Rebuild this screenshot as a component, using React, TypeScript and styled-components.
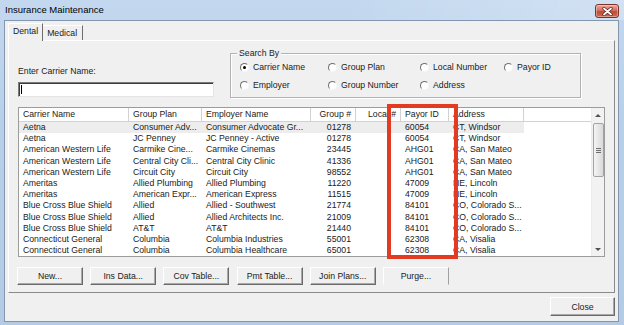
import { FC } from "react";
import styled, { createGlobalStyle } from "styled-components";

type Align = "left" | "right";

interface Column {
    title: string;
    width: number;
    align: Align;
}

const columns: Column[] = [
    { title: "Carrier Name", width: 110, align: "left" },
    { title: "Group Plan", width: 73, align: "left" },
    { title: "Employer Name", width: 109, align: "left" },
    { title: "Group #", width: 45, align: "right" },
    { title: "Local #", width: 45, align: "right" },
    { title: "Payor ID", width: 48, align: "left" },
    { title: "Address", width: 75, align: "left" },
];

const rows: string[][] = [
    ["Aetna", "Consumer Adv...", "Consumer Advocate Gr...", "01278", "", "60054", "CT, Windsor"],
    ["Aetna", "JC Penney", "JC Penney - Active", "01278", "", "60054", "CT, Windsor"],
    ["American Western Life", "Carmike Cine...", "Carmike Cinemas", "23445", "", "AHG01", "CA, San Mateo"],
    ["American Western Life", "Central City Cli...", "Central City Clinic", "41336", "", "AHG01", "CA, San Mateo"],
    ["American Western Life", "Circuit City", "Circuit City", "98552", "", "AHG01", "CA, San Mateo"],
    ["Ameritas", "Allied Plumbing", "Allied Plumbing", "11220", "", "47009", "NE, Lincoln"],
    ["Ameritas", "American Expr...", "American Express", "11515", "", "47009", "NE, Lincoln"],
    ["Blue Cross Blue Shield", "Allied", "Allied - Southwest", "21774", "", "84101", "CO, Colorado S..."],
    ["Blue Cross Blue Shield", "Allied", "Allied Architects Inc.", "21009", "", "84101", "CO, Colorado S..."],
    ["Blue Cross Blue Shield", "AT&T", "AT&T", "21440", "", "84101", "CO, Colorado S..."],
    ["Connecticut General", "Columbia", "Columbia Industries", "55001", "", "62308", "CA, Visalia"],
    ["Connecticut General", "Columbia", "Columbia Healthcare", "65001", "", "62308", "CA, Visalia"],
];

const searchOptions = [
    { label: "Carrier Name", checked: true },
    { label: "Group Plan" },
    { label: "Local Number" },
    { label: "Payor ID" },
    { label: "Employer" },
    { label: "Group Number" },
    { label: "Address" },
];

const actions = ["New...", "Ins Data...", "Cov Table...", "Pmt Table...", "Join Plans...", "Purge..."];

const GlobalStyle = createGlobalStyle`
    html, body {
        margin: 0;
        padding: 0;
        background: #fff;
    }

    body {
        font-family: "Liberation Sans", Arial, sans-serif;
        font-size: 8.7px;
        color: #1a1a1a;
    }

    * {
        box-sizing: border-box;
    }
`;

const Window = styled.div`
    width: 624px;
    height: 325px;
    display: flex;
    flex-direction: column;
    background: linear-gradient(180deg, #c3d8ef 0%, #b9cfe9 40%, #b4cbe6 100%);
    overflow: hidden;
`;

const TitleBar = styled.div`
    height: 20px;
    flex: none;
    display: flex;
    align-items: flex-start;
    padding: 0 5px 0 5px;
    background: linear-gradient(90deg, rgba(255,255,255,0) 0%, rgba(255,255,255,0) 55%, rgba(255,255,255,0.25) 100%);
`;

const Title = styled.span`
    font-size: 9.5px;
    line-height: 20px;
    color: #000;
`;

const CaptionClose = styled.div`
    margin-left: auto;
    margin-top: 4px;
    width: 24px;
    height: 14px;
    border: 1px solid #7b3329;
    border-radius: 3px;
    background: linear-gradient(180deg, #e9a699 0%, #d5715f 45%, #c24a36 55%, #cf6a52 100%);
    display: flex;
    align-items: center;
    justify-content: center;
    box-shadow: inset 0 0 0 1px rgba(255,255,255,0.35);
`;

const Client = styled.div`
    flex: 1;
    margin: 0 5px 3px 4px;
    border: 1px solid #8296ad;
    background: #f0f0f0;
    display: flex;
    flex-direction: column;
    padding: 2px 2px 5px 3px;
`;

const TabStrip = styled.div`
    height: 17px;
    flex: none;
    display: flex;
    align-items: flex-end;
`;

const Tab = styled.div<{ $active?: boolean }>`
    position: relative;
    z-index: 1;
    height: ${(p) => (p.$active ? 18 : 15)}px;
    margin-bottom: ${(p) => (p.$active ? -1 : 0)}px;
    padding: ${(p) => (p.$active ? "0 4px" : "0 5px 0 4px")};
    background: #f0f0f0;
    border-top: 1px solid #fff;
    border-left: ${(p) => (p.$active ? "1px solid #fff" : "none")};
    border-right: 1px solid #6d6d6d;
    line-height: ${(p) => (p.$active ? 15 : 14)}px;
    text-align: center;
    white-space: nowrap;
`;

const Panel = styled.div`
    height: 253px;
    flex: none;
    display: flex;
    flex-direction: column;
    border: 1px solid;
    border-color: #fff #8a8a8a #8a8a8a #fff;
    margin-right: 1px;
`;

const TopArea = styled.div`
    height: 66px;
    flex: none;
    display: flex;
    padding-left: 9px;
`;

const CarrierBlock = styled.div`
    width: 196px;
    display: flex;
    flex-direction: column;
    justify-content: flex-end;
    padding-bottom: 10px;
`;

const FieldLabel = styled.label`
    height: 11px;
    line-height: 11px;
    margin-bottom: 5px;
`;

const TextBox = styled.div`
    height: 15px;
    background: #fff;
    border: 1px solid;
    border-color: #7a7a7a #e4e4e4 #e4e4e4 #7a7a7a;
    box-shadow: inset 1px 1px 0 #3c3c3c;
    display: flex;
    align-items: center;
    padding-left: 2px;
`;

const Caret = styled.span`
    width: 1px;
    height: 9px;
    background: #000;
`;

const GroupBox = styled.div`
    position: relative;
    margin: 12px 0 0 16px;
    width: 351px;
    height: 45px;
    border: 1px solid #b2b2b2;
    box-shadow: 1px 1px 0 #fff, inset 1px 1px 0 #fff;
    padding: 4px 0 0 9px;
`;

const GroupTitle = styled.span`
    position: absolute;
    top: -6px;
    left: 6px;
    padding: 0 2px;
    line-height: 11px;
    background: #f0f0f0;
`;

const RadioGrid = styled.div`
    display: grid;
    grid-template-columns: 88px 92px 84px auto;
    grid-auto-rows: 18px;
`;

const RadioItem = styled.div`
    display: flex;
    align-items: center;
    gap: 4px;
    white-space: nowrap;
`;

const RadioCircle = styled.span<{ $checked?: boolean }>`
    flex: none;
    width: 9px;
    height: 9px;
    border-radius: 50%;
    border: 1px solid;
    border-color: #6f6f6f #f6f6f6 #f6f6f6 #6f6f6f;
    background: #fff;
    display: flex;
    align-items: center;
    justify-content: center;

    &::after {
        content: "";
        width: 3px;
        height: 3px;
        border-radius: 50%;
        background: ${(p) => (p.$checked ? "#000" : "transparent")};
    }
`;

const ListView = styled.div`
    position: relative;
    margin-left: 9px;
    width: 587px;
    height: 150px;
    flex: none;
    border: 1px solid #9c9c9c;
    background: #fff;
    display: flex;
`;

const ListColumns = styled.div`
    flex: 1;
    display: flex;
    flex-direction: column;
    overflow: hidden;
`;

const HeaderRow = styled.div`
    height: 14px;
    flex: none;
    display: flex;
    line-height: 13px;
    border-bottom: 1px solid #d2d2d2;
`;

const HeaderCell = styled.div<{ $width: number; $align: Align }>`
    flex: none;
    width: ${(p) => p.$width}px;
    padding: 0 4px;
    text-align: ${(p) => p.$align};
    border-right: 1px solid #d2d2d2;
    white-space: nowrap;
    overflow: hidden;
`;

const HeaderFiller = styled.div`
    flex: 1;
`;

const DataRow = styled.div<{ $selected?: boolean }>`
    display: flex;
    width: fit-content;
    height: 11.2px;
    line-height: 11.2px;
    background: ${(p) => (p.$selected ? "#ededed" : "transparent")};
`;

const DataCell = styled.div<{ $width: number; $align: Align }>`
    flex: none;
    width: ${(p) => p.$width}px;
    padding: 0 4px;
    text-align: ${(p) => p.$align};
    border-right: 1px solid transparent;
    white-space: nowrap;
    overflow: hidden;
`;

const ScrollBar = styled.div`
    width: 13px;
    flex: none;
    display: flex;
    flex-direction: column;
    background: #f2f2f2;
    border-left: 1px solid #ececec;
`;

const ScrollArrow = styled.div<{ $dir: "up" | "down" }>`
    height: 14px;
    flex: none;
    display: flex;
    align-items: center;
    justify-content: center;

    &::after {
        content: "";
        border-left: 3px solid transparent;
        border-right: 3px solid transparent;
        ${(p) => (p.$dir === "up" ? "border-bottom: 3px solid #505050;" : "border-top: 3px solid #505050;")}
    }
`;

const ScrollTrack = styled.div`
    flex: 1;
    padding: 1px 0 0 1px;
`;

const ScrollThumb = styled.div`
    width: 11px;
    height: 54px;
    border: 1px solid #a3a3a3;
    border-radius: 2px;
    background: linear-gradient(90deg, #f4f4f4 0%, #e6e6e6 50%, #dadada 100%);
    display: flex;
    flex-direction: column;
    align-items: center;
    justify-content: center;
    gap: 1px;
`;

const GripLine = styled.span`
    width: 5px;
    height: 1px;
    background: #6f6f6f;
`;

const Highlight = styled.div`
    position: absolute;
    z-index: 2;
    left: 368px;
    top: -4px;
    width: 71px;
    height: 155px;
    border: 4px solid #e23b22;
    pointer-events: none;
`;

const ButtonRow = styled.div`
    display: flex;
    gap: 7.2px;
    margin-top: 10px;
    padding-left: 8px;
`;

const PushButton = styled.div<{ $flat?: boolean }>`
    width: 66px;
    height: 18px;
    flex: none;
    display: flex;
    align-items: center;
    justify-content: center;
    background: #f0f0f0;
    border: 1px solid;
    border-color: ${(p) => (p.$flat ? "#fff #a0a0a0 transparent #fff" : "#fff #6a6a6a #6a6a6a #fff")};
    box-shadow: ${(p) => (p.$flat ? "none" : "inset -1px -1px 0 #a8a8a8")};
    white-space: nowrap;
`;

const Footer = styled.div`
    display: flex;
    justify-content: flex-end;
    margin-top: 4px;
    padding-right: 1px;
`;

const CloseButton = styled(PushButton)`
    width: 65px;
    height: 19px;
`;

const App: FC = () => {
    return (
        <>
            <GlobalStyle />
            <Window>
                <TitleBar>
                    <Title>Insurance Maintenance</Title>
                    <CaptionClose>
                        <svg width="11" height="9" viewBox="0 0 11 9">
                            <path d="M2 1.5 L9 7.5 M9 1.5 L2 7.5" stroke="#5a1f18" strokeWidth="3.2" strokeLinecap="round" />
                            <path d="M2 1.5 L9 7.5 M9 1.5 L2 7.5" stroke="#fff" strokeWidth="1.8" strokeLinecap="round" />
                        </svg>
                    </CaptionClose>
                </TitleBar>
                <Client>
                    <TabStrip>
                        <Tab $active>Dental</Tab>
                        <Tab>Medical</Tab>
                    </TabStrip>
                    <Panel>
                        <TopArea>
                            <CarrierBlock>
                                <FieldLabel>Enter Carrier Name:</FieldLabel>
                                <TextBox>
                                    <Caret />
                                </TextBox>
                            </CarrierBlock>
                            <GroupBox>
                                <GroupTitle>Search By</GroupTitle>
                                <RadioGrid>
                                    {searchOptions.map((opt) => (
                                        <RadioItem key={opt.label}>
                                            <RadioCircle $checked={opt.checked} />
                                            <span>{opt.label}</span>
                                        </RadioItem>
                                    ))}
                                </RadioGrid>
                            </GroupBox>
                        </TopArea>
                        <ListView>
                            <ListColumns>
                                <HeaderRow>
                                    {columns.map((col) => (
                                        <HeaderCell key={col.title} $width={col.width} $align={col.align}>
                                            {col.title}
                                        </HeaderCell>
                                    ))}
                                    <HeaderFiller />
                                </HeaderRow>
                                {rows.map((row, index) => (
                                    <DataRow key={index} $selected={index === 0}>
                                        {row.map((value, i) => (
                                            <DataCell key={i} $width={columns[i].width} $align={columns[i].align}>
                                                {value}
                                            </DataCell>
                                        ))}
                                    </DataRow>
                                ))}
                            </ListColumns>
                            <ScrollBar>
                                <ScrollArrow $dir="up" />
                                <ScrollTrack>
                                    <ScrollThumb>
                                        <GripLine />
                                        <GripLine />
                                        <GripLine />
                                    </ScrollThumb>
                                </ScrollTrack>
                                <ScrollArrow $dir="down" />
                            </ScrollBar>
                            <Highlight />
                        </ListView>
                        <ButtonRow>
                            {actions.map((label) => (
                                <PushButton key={label} $flat={label === "Purge..."}>
                                    {label}
                                </PushButton>
                            ))}
                        </ButtonRow>
                    </Panel>
                    <Footer>
                        <CloseButton>Close</CloseButton>
                    </Footer>
                </Client>
            </Window>
        </>
    );
};

export default App;
